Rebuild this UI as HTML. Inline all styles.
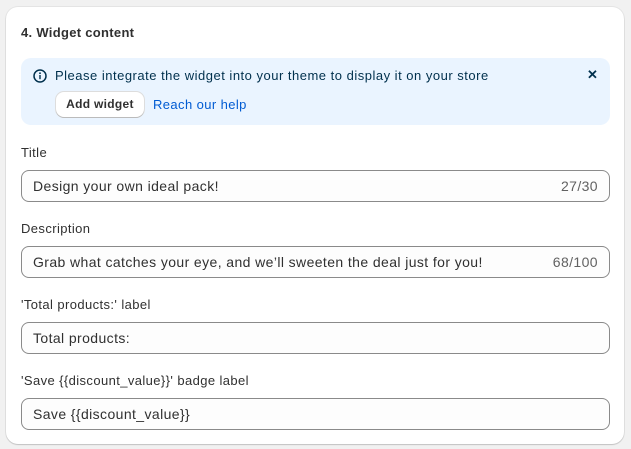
<!DOCTYPE html>
<html><head><style>
body{margin:0;width:631px;height:449px;background:#f1f1f1;font-family:"Liberation Sans",sans-serif;overflow:hidden;position:relative}
.card{position:absolute;left:6px;top:7px;width:618px;height:437px;background:#fff;border-radius:12px;box-shadow:0 1px 1px rgba(0,0,0,.15),0 0 0 1px rgba(0,0,0,.05)}
.h{position:absolute;left:15px;top:18px;font-size:13px;font-weight:bold;color:#303030;letter-spacing:.3px}
.ban{position:absolute;left:15px;top:51px;width:589px;height:67px;background:#eaf4ff;border-radius:10px}
.ban .t{position:absolute;left:34px;top:10px;font-size:13px;color:#00304d;letter-spacing:.5px}
.ban .btn{position:absolute;left:35px;top:34px;width:88px;height:25px;background:#fff;border-radius:8px;box-shadow:0 1px 0 #bbb,0 0 0 1px #ddd;font-size:12px;font-weight:bold;color:#303030;text-align:center;line-height:25px;letter-spacing:.3px}
.ban .lk{position:absolute;left:132px;top:39px;font-size:13px;color:#005bd3;letter-spacing:.4px}
.ban .x{position:absolute;left:566px;top:9px;font-size:13px;color:#00304d;font-weight:bold}
.lab{position:absolute;left:15px;font-size:13px;color:#303030;letter-spacing:.4px}
.in{position:absolute;left:15px;width:587px;height:30px;border:1px solid #8a8a8a;border-radius:8px;background:#fdfdfd;font-size:14px;color:#303030;line-height:30px;letter-spacing:.4px}
.in span{position:absolute;left:11px}.in b{position:absolute;right:11px;font-weight:normal;color:#616161}
</style></head><body><div class="card">
<div class="h">4. Widget content</div>
<div class="ban">
<svg style="position:absolute;left:12px;top:11px" width="14" height="14" viewBox="0 0 14 14"><circle cx="7" cy="7" r="6" fill="none" stroke="#00304d" stroke-width="1.5"/><rect x="6.3" y="6" width="1.4" height="4.2" fill="#00304d"/><circle cx="7" cy="4.2" r=".9" fill="#00304d"/></svg>
<div class="t">Please integrate the widget into your theme to display it on your store</div>
<div class="btn">Add widget</div><div class="lk">Reach our help</div><div class="x">✕</div></div>
<div class="lab" style="top:138px">Title</div>
<div class="in" style="top:163px"><span>Design your own ideal pack!</span><b>27/30</b></div>
<div class="lab" style="top:214px">Description</div>
<div class="in" style="top:239px"><span>Grab what catches your eye, and we’ll sweeten the deal just for you!</span><b>68/100</b></div>
<div class="lab" style="top:290px">'Total products:' label</div>
<div class="in" style="top:315px"><span>Total products:</span></div>
<div class="lab" style="top:366px">'Save {{discount_value}}' badge label</div>
<div class="in" style="top:391px"><span>Save {{discount_value}}</span></div>
</div></body></html>
